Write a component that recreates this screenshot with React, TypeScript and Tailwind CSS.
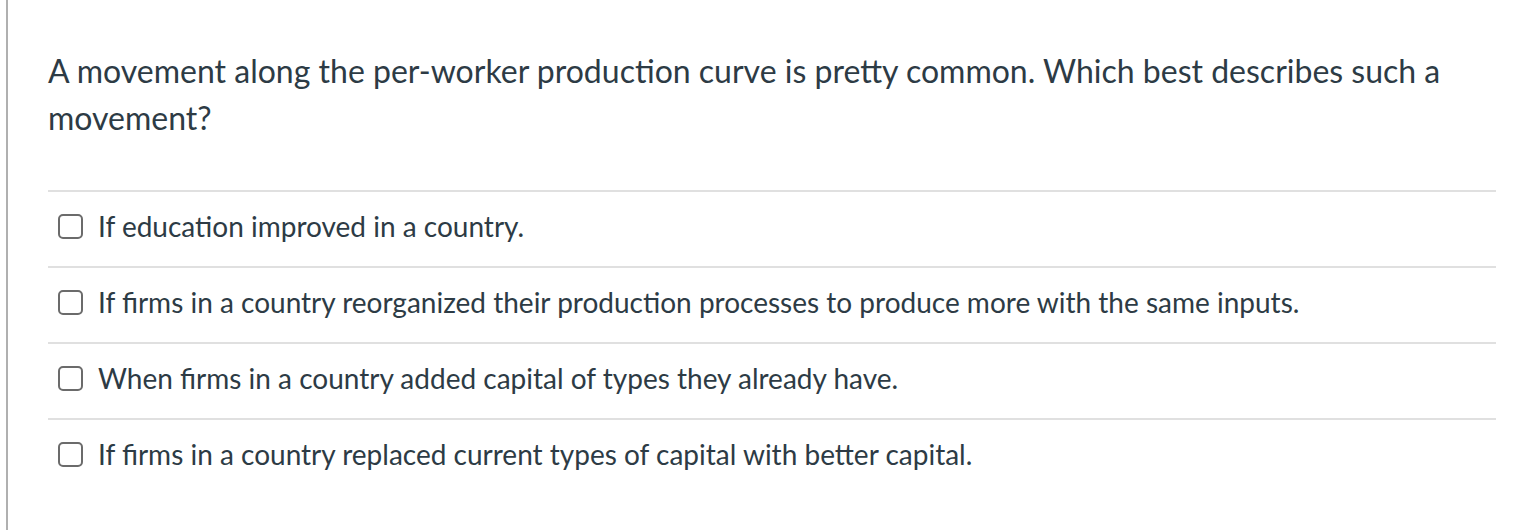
import React from "react";

const options = [
  "If education improved in a country.",
  "If firms in a country reorganized their production processes to produce more with the same inputs.",
  "When firms in a country added capital of types they already have.",
  "If firms in a country replaced current types of capital with better capital.",
];

export default function App() {
  return (
    <div
      className="flex h-[530px] w-[1526px] bg-white text-[#2d3b45]"
      style={{ fontFamily: "Lato, 'Noto Sans', sans-serif" }}
    >
      <div className="ml-[6px] w-[2px] shrink-0 bg-[#b0b0b0]" />
      <div className="flex-1 pl-[40px] pr-[30px] pt-[47px]">
        <p className="text-[32px] leading-[47px]">
          A movement along the per-worker production curve is pretty common. Which best describes such a movement?
        </p>
        <div className="mt-[49px]">
          {options.map((o) => (
            <div key={o} className="flex items-center border-t-2 border-[#e0e0e0] pb-[23px] pt-[17px] pl-[10px]">
              <span className="mr-[15px] h-[25px] w-[25px] shrink-0 rounded-[5px] border-2 border-[#6b6b6b]" />
              <span className="text-[28px] leading-[34px]">{o}</span>
            </div>
          ))}
        </div>
      </div>
    </div>
  );
}
